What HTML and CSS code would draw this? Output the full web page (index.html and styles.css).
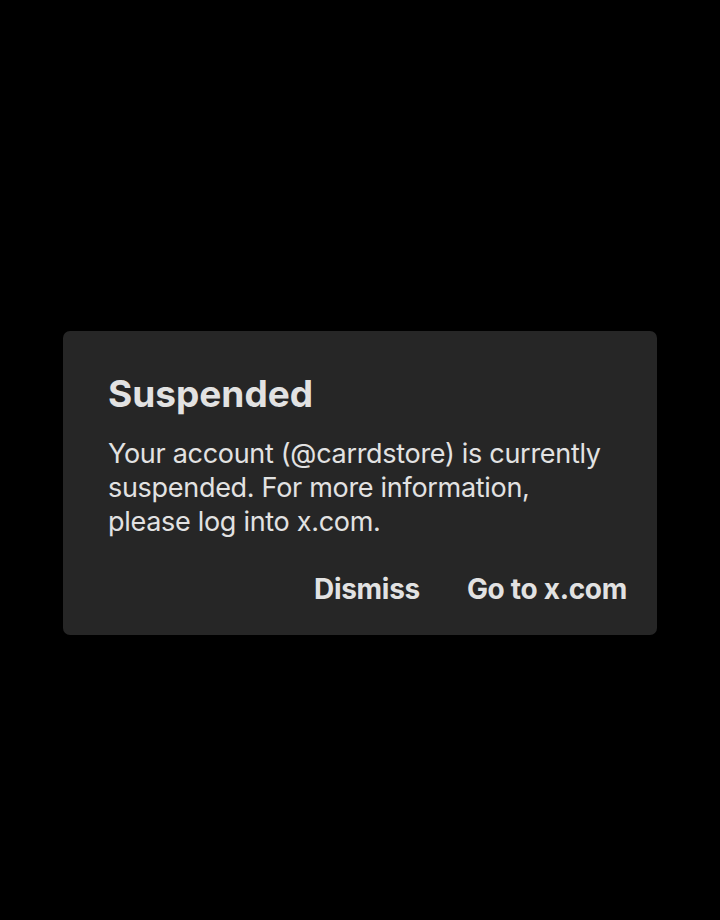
FILE: index.html
```html
<!DOCTYPE html>
<html lang="en">
<head>
  <meta charset="UTF-8" />
  <meta name="viewport" content="width=device-width, initial-scale=1.0" />
  <title>Suspended</title>
  <link rel="stylesheet" href="styles.css">
</head>
<body>
  <div class="dialog">
    <h1>Suspended</h1>
    <p>Your account (@carrdstore) is currently suspended. For more information, please log into x.com.</p>
    <div class="actions">
      <a class="action">Dismiss</a>
      <a class="action">Go to x.com</a>
    </div>
  </div>
</body>
</html>
```

FILE: styles.css
```css
:root {
  --bg: #000000;
  --card: #262626;
  --text: #e2e2e2;
}

* {
  box-sizing: border-box;
  margin: 0;
  padding: 0;
  font-family: 'Inter', 'Noto Sans', sans-serif;
}

body {
  background: var(--bg);
  color: var(--text);
  padding-top: 331px;
}

.dialog {
  width: 594px;
  height: 304px;
  margin: 0 auto;
  background: var(--card);
  border-radius: 7px;
  padding: 40px 30px 0 45px;
}

.dialog h1 {
  font-size: 37px;
  font-weight: 700;
  line-height: 46px;
  letter-spacing: 0;
}

.dialog p {
  margin-top: 20px;
  font-size: 27px;
  line-height: 34px;
  letter-spacing: -0.3px;
  max-width: 500px;
}

.actions {
  display: flex;
  justify-content: flex-end;
  gap: 47px;
  margin-top: 33px;
}

.action {
  font-size: 28px;
  font-weight: 700;
  line-height: 34px;
  letter-spacing: -0.3px;
  cursor: pointer;
}
```
